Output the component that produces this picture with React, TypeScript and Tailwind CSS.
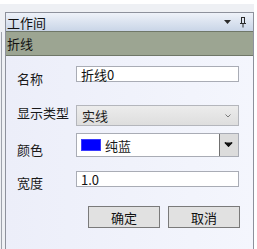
const FONT = "font-['Microsoft_YaHei','Noto_Sans_CJK_SC',sans-serif]";

function TextBox({ value }: { value: string }) {
  return (
    <div className="w-[163px] h-[16px] bg-white border border-[#a9acb5] flex items-center pl-[4px] text-[13px] leading-none text-[#111]">
      {value}
    </div>
  );
}

export default function App() {
  return (
    <div className={`w-[257px] h-[249px] bg-white flex flex-col overflow-hidden ${FONT}`}>
      <div className="h-[4px] bg-white" />
      <div className="flex flex-1 bg-[#eef0f4]">
        {/* outer dock strip */}
        <div className="w-[5px] flex flex-col">
          <div className="h-[28px]" />
          <div className="flex-1 flex">
            <div className="w-[1px]" />
            <div className="w-[1px] bg-[#9ea2ab]" />
          </div>
        </div>

        {/* panel */}
        <div className="w-[250px] flex flex-col">
          <div className="h-[8px]" />
          <div className="flex-1 flex flex-col border-l border-r border-[#8d919c]">
            {/* title bar */}
            <div className="h-[19px] border-t border-[#8d919c] bg-gradient-to-b from-[#eef2f9] to-[#c9d5e7] flex items-center pl-[1px] pr-[6px]">
              <span className="text-[13px] leading-none text-[#111]">工作间</span>
              <div className="flex-1" />
              <svg width="7" height="5" viewBox="0 0 7 5" className="mr-[8px] mt-[1px]">
                <path d="M0 0h7L3.5 4z" fill="#2b2b2b" />
              </svg>
              <svg width="8" height="11" viewBox="0 0 8 11">
                <path d="M2 0.5h4M2.5 0.5v6M5.5 0.5v6M1 6.5h6M4 6.5v4" stroke="#2b2b2b" strokeWidth="1" fill="none" />
              </svg>
            </div>

            {/* section header */}
            <div className="h-[25px] bg-[#9ca592] border-t border-b border-[#6f7768] flex items-center pl-[1px]">
              <span className="text-[13px] leading-none text-[#111]">折线</span>
            </div>

            {/* form */}
            <div className="flex-1 bg-gradient-to-r from-[#eceef9] to-[#f4f6fd] text-[13px] text-[#1a1a1a] pl-[11px]">
              <div className="flex mt-[10px] h-[16px]">
                <span className="w-[59px] mt-[5px] leading-[16px]">名称</span>
                <TextBox value="折线0" />
              </div>

              <div className="flex mt-[23px] h-[21px]">
                <span className="w-[59px] mt-[0px] leading-[16px]">显示类型</span>
                <div className="w-[163px] h-[21px] border border-[#b4b6bc] bg-gradient-to-b from-[#ececec] to-[#dedede] flex items-center pl-[5px] pr-[7px]">
                  <span className="leading-none">实线</span>
                  <div className="flex-1" />
                  <svg width="6" height="4" viewBox="0 0 6 4">
                    <path d="M0.5 0.5L3 3L5.5 0.5" stroke="#7a7a7a" strokeWidth="1" fill="none" />
                  </svg>
                </div>
              </div>

              <div className="flex mt-[7px] h-[24px]">
                <span className="w-[59px] mt-[9px] leading-[16px]">颜色</span>
                <div className="w-[163px] h-[24px] border border-[#a9acb5] bg-white flex items-center">
                  <div className="ml-[4px] w-[20px] h-[12px] bg-[#0000ff] border border-[#3a3aff]" />
                  <span className="ml-[4px] leading-none">纯蓝</span>
                  <div className="flex-1" />
                  <div className="w-[19px] h-[22px] bg-[#dcdcdc] border-l border-[#707070] flex items-center justify-center">
                    <svg width="9" height="6" viewBox="0 0 9 6">
                      <path d="M0.5 0.5h8L4.5 5z" fill="#111" />
                      <path d="M1 0.5L4.5 4L8 0.5" stroke="#111" strokeWidth="1.5" fill="none" />
                    </svg>
                  </div>
                </div>
              </div>

              <div className="flex mt-[14px] h-[16px]">
                <span className="w-[59px] mt-[4px] leading-[16px]">宽度</span>
                <TextBox value="1.0" />
              </div>

              <div className="flex justify-end gap-[8px] mt-[19px] w-[223px]">
                <button className="w-[72px] h-[22px] bg-[#e1e1e1] border border-[#7a7a7a] text-[13px] leading-none text-[#111]">
                  确定
                </button>
                <button className="w-[72px] h-[22px] bg-[#e1e1e1] border border-[#7a7a7a] text-[13px] leading-none text-[#111]">
                  取消
                </button>
              </div>
            </div>
          </div>
        </div>
        <div className="w-[3px] bg-white" />
      </div>
    </div>
  );
}
